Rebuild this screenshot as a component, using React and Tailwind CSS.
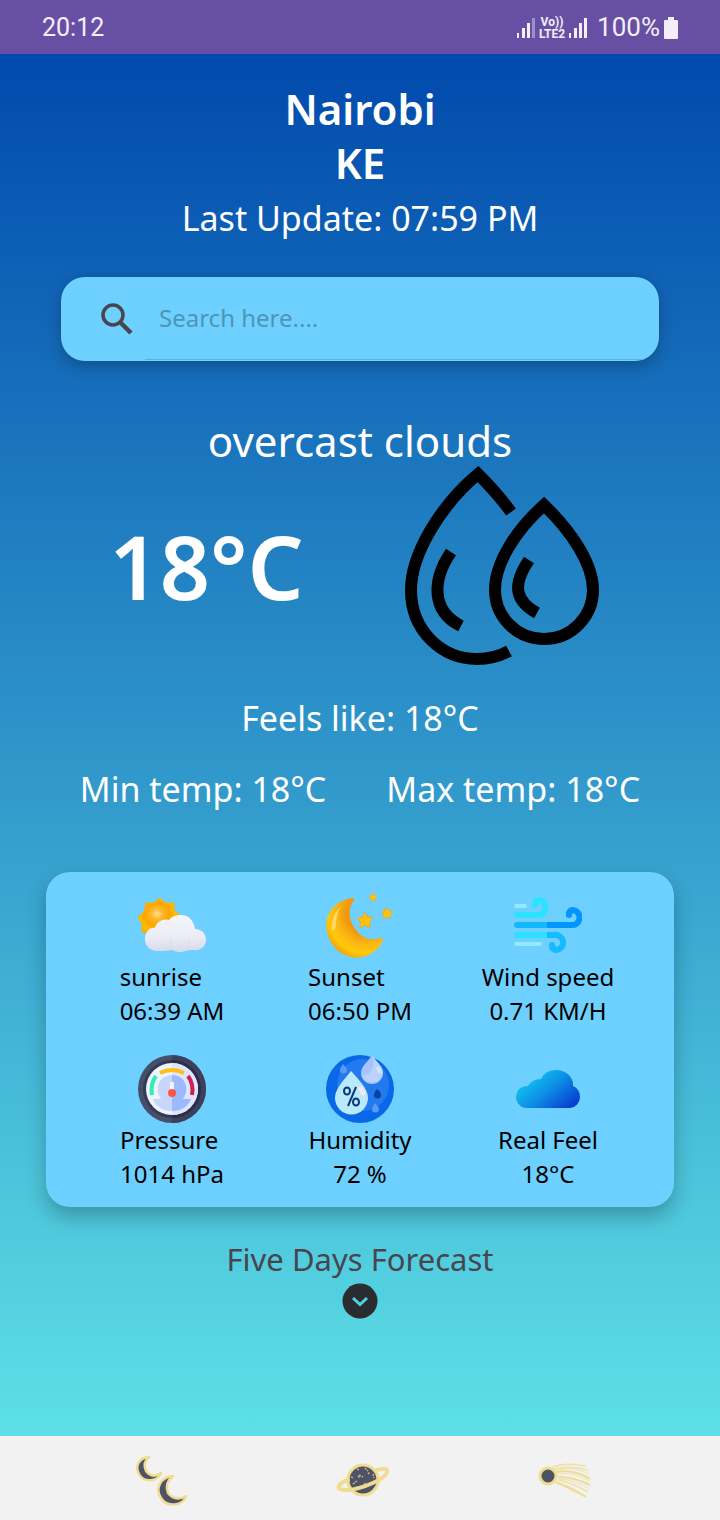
import React from "react";

function Signal({ weak }) {
  return (
    <svg viewBox="0 0 18 20" className="h-5 w-[18px]" fill="#f3eefa" aria-hidden="true">
      <rect x="0" y="15" width="2" height="5" />
      <rect x="5" y="10" width="3" height="10" />
      <rect x="10" y="5" width="3" height="15" />
      <rect x="15" y="0" width="3" height="20" opacity={weak ? 0.4 : 1} />
    </svg>
  );
}

function StatusBar() {
  return (
    <header className="flex h-[54px] items-center justify-between bg-[#6750a4] px-[42px] pt-px text-[#f3eefa]">
      <span className="font-[Roboto] text-[25px]">20:12</span>
      <div className="flex items-center">
        <Signal weak />
        <span className="mx-1 flex flex-col items-center font-[Roboto] text-[12px] leading-[12px] font-bold">
          <span>Vo))</span>
          <span>LTE2</span>
        </span>
        <Signal />
        <span className="ml-2.5 font-[Roboto] text-[26px]">100%</span>
        <svg viewBox="0 0 14 22" className="ml-1 h-[22px] w-3.5" fill="#f3eefa" aria-hidden="true">
          <path d="M4 0h6v3h3q1 0 1 1v17q0 1-1 1H1q-1 0-1-1V4q0-1 1-1h3z" />
        </svg>
      </div>
    </header>
  );
}

function Drops() {
  return (
    <svg viewBox="0 0 196 202" className="h-[202px] w-[196px]" fill="none" stroke="#000" strokeWidth="12" aria-hidden="true">
      <path d="M107 47Q94 29 74 9C38 39 7 88 7 125C7 166 38 194 73 194Q90 194 105 186" />
      <path d="M140 40C112 65 91 98 91 125C91 151 112 174 140 174C168 174 189 151 189 125C189 99 168 67 140 40Z" />
      <path d="M47 87C28 115 27 146 57 161" />
      <path d="M125 95C108 120 111 136 133 148" />
    </svg>
  );
}

function SunriseIcon() {
  return (
    <svg viewBox="0 0 68 68" className="size-[68px]" aria-hidden="true">
      <defs>
        <radialGradient id="sun" cx=".45" cy=".42" r=".6">
          <stop offset="0" stopColor="#ffe08a" />
          <stop offset=".25" stopColor="#ffb52a" />
          <stop offset=".5" stopColor="#ffa500" />
          <stop offset=".75" stopColor="#fcc000" />
          <stop offset="1" stopColor="#f5a20a" />
        </radialGradient>
        <linearGradient id="puff" x1="0" y1="0" x2="0" y2="1">
          <stop offset="0" stopColor="#f6f6fc" />
          <stop offset=".6" stopColor="#eaebf5" />
          <stop offset="1" stopColor="#d6daea" />
        </linearGradient>
      </defs>
      <path d="M22 6L27 11L36 11L36 18L42 23L40 44L12 38L9 41L4 40L4 32L0 25L6 20L8 11L16 11Z" fill="url(#sun)" stroke="#f9b000" strokeWidth="1" strokeLinejoin="round" />
      <path d="M19 59C12 59 7 54 7 47C7 40 12 35 17 36C18 30 25 26 31 28C34 24 39 23 43 23C51 23 56 29 57 37C64 37 68 42 68 48C68 54 63 59 56 58C52 58 50 58 48 59C43 61 38 60 34 58C29 59 24 59 19 59Z" fill="url(#puff)" />
      <path d="M34 57Q30 52 34 46M49 58Q53 53 50 47" fill="none" stroke="#d9dcea" strokeWidth="2" opacity=".5" />
    </svg>
  );
}

function Star({ x, y, s }) {
  return (
    <path
      transform={`translate(${x} ${y}) scale(${s})`}
      d="M-.5-8.500L2.500-3L8.500-2.500L4.500 2L5.500 8L0 5.500L-5.500 8L-4.500 2L-8.500-2L-2.500-3Z"
      fill="#ffc20e"
      stroke="#f3a712"
      strokeWidth="1"
      strokeLinejoin="round"
    />
  );
}

function SunsetIcon() {
  return (
    <svg viewBox="0 0 68 68" className="size-[68px]" aria-hidden="true">
      <defs>
        <radialGradient id="moon" cx=".7" cy=".25" r=".8">
          <stop offset="0" stopColor="#ee8f0a" />
          <stop offset=".45" stopColor="#f09a10" />
          <stop offset=".68" stopColor="#fdb913" />
          <stop offset=".85" stopColor="#ffc907" />
          <stop offset="1" stopColor="#f3a40c" />
        </radialGradient>
      </defs>
      <path d="M28 6C9 7-3 23 1 40C5 58 21 68 36 65C48 62 56 54 57 47Q57 45 54 46C46 49 37 47 31 39C23 30 21 18 28 8Q29 6 28 6Z" fill="url(#moon)" />
      <path d="M16 14Q4 23 6 37Q9 41 10 33Q10 22 16 14Z" fill="#ffe08a" opacity=".7" />
      <Star x={39} y={28} s={0.95} />
      <Star x={61} y={21} s={0.7} />
      <Star x={47} y={5} s={0.5} />
    </svg>
  );
}

function WindIcon() {
  return (
    <svg viewBox="0 0 68 68" className="size-[68px]" fill="none" strokeWidth="6" aria-hidden="true">
      <path d="M2 14H11M2 52H26" stroke="#91eaff" strokeWidth="4" strokeLinecap="round" />
      <path d="M3 23H23A7.500 7.500 0 0 0 25 8Q21 8 21 13" stroke="#2de2ff" strokeLinecap="round" />
      <path d="M3 33H36" stroke="#12b8ff" strokeLinecap="round" />
      <path d="M3 43H36" stroke="#2de2ff" strokeLinecap="round" />
      <path d="M33 33H57A7.500 7.500 0 0 0 59 18Q55 18 55 23" stroke="#0095ff" />
      <circle cx="55" cy="23" r="3" fill="#0095ff" />
      <path d="M33 43H40A7.500 7.500 0 0 1 43 58Q38 58 38 53" stroke="#16baff" />
      <circle cx="38" cy="53" r="3" fill="#16baff" />
    </svg>
  );
}

function PressureIcon() {
  return (
    <svg viewBox="0 0 68 68" className="size-[68px]" fill="none" aria-hidden="true">
      <circle cx="34" cy="34" r="34" fill="#474f68" />
      <path d="M34 0a34 34 0 0 1 0 68z" fill="#3c405c" />
      <circle cx="34" cy="34" r="29" fill="#333a55" />
      <path d="M34 5a29 29 0 0 1 0 58z" fill="#2c2d49" />
      <circle cx="34" cy="34" r="26" fill="#edf3ff" />
      <path d="M34 8a26 26 0 0 1 0 52z" fill="#dce6ff" />
      <path d="M34 20a14 14 0 0 0-13 20l2 4h-8q5 12 19 12z" fill="#c7d7fc" />
      <path d="M34 20a14 14 0 0 1 13 20l-2 4h8q-5 12-19 12z" fill="#9bb9fb" />
      <g strokeWidth="4">
        <path d="M14 40Q12 29 18 21" stroke="#2eefae" />
        <path d="M22 18Q34 12 46 18" stroke="#fdbf10" />
        <path d="M50 21Q56 29 54 40" stroke="#d51d51" />
      </g>
      <path d="M34 27v10" stroke="#f2f5ff" strokeWidth="4" />
      <circle cx="34" cy="38" r="4" fill="#ff5547" />
    </svg>
  );
}

function HumidityIcon() {
  return (
    <svg viewBox="0 0 68 68" className="size-[68px]" aria-hidden="true">
      <circle cx="34" cy="34" r="34" fill="#0968e8" />
      <circle cx="37" cy="30" r="26" fill="#2379ee" />
      <path d="M25 16C19 24 9 33 9 43a16 16 0 0 0 33 0C42 33 32 24 25 16z" fill="#bae9fc" />
      <path d="M46 0C42 7 35 11 35 18a11 11 0 0 0 22 0C57 11 50 7 46 0z" fill="#a4c4fb" />
      <path d="M46 0C50 10 46 20 36 21a11 11 0 0 0 21-3C57 11 50 7 46 0z" fill="#b9d3fd" />
      <ellipse cx="53" cy="15" rx="2" ry="4" fill="#cbebfb" transform="rotate(-25 53 15)" />
      <ellipse cx="36" cy="36" rx="2.500" ry="5" fill="#f4e7ef" transform="rotate(-28 36 36)" />
      <path d="M17 9q-3 4-3 6a3.500 3.500 0 0 0 7 0q0-2-4-6zM49 48q-3 4-3 6a3.500 3.500 0 0 0 7 0q0-2-4-6z" fill="#5b98f5" />
      <path d="M51 34q-3 3-3 6a3.500 3.500 0 0 0 7 0q0-3-4-6z" fill="#07439d" />
      <g fill="none" stroke="#073b78" strokeWidth="2">
        <ellipse cx="21" cy="36" rx="3" ry="3.500" />
        <ellipse cx="30" cy="47" rx="3" ry="3.500" />
        <path d="M30 32L22 51" />
      </g>
    </svg>
  );
}

function CloudIcon() {
  return (
    <svg viewBox="0 0 68 68" className="size-[68px]" aria-hidden="true">
      <defs>
        <linearGradient id="cloud" x1="0" y1=".2" x2="1" y2=".9">
          <stop offset="0" stopColor="#12d4f5" />
          <stop offset=".5" stopColor="#0c8ee5" />
          <stop offset="1" stopColor="#0833cd" />
        </linearGradient>
      </defs>
      <path d="M13 53A11 11 0 0 1 2 42Q3 31 14 31Q18 24 27 24Q31 15 42 15C53 15 60 23 59 31Q66 34 66 42A11 11 0 0 1 56 53Z" fill="url(#cloud)" />
    </svg>
  );
}

const stats = [
  { icon: SunriseIcon, label: "sunrise", value: "06:39 AM", left: true },
  { icon: SunsetIcon, label: "Sunset", value: "06:50 PM", left: true },
  { icon: WindIcon, label: "Wind speed", value: "0.71 KM/H" },
  { icon: PressureIcon, label: "Pressure", value: "1014 hPa", left: true },
  { icon: HumidityIcon, label: "Humidity", value: "72 %" },
  { icon: CloudIcon, label: "Real Feel", value: "18°C" },
];

function Stat({ icon: Icon, label, value, left }) {
  return (
    <div className="flex flex-col items-center">
      <Icon />
      <dl className={left ? "text-left" : "text-center"}>
        <dt>{label}</dt>
        <dd>{value}</dd>
      </dl>
    </div>
  );
}

function MoonsIcon() {
  return (
    <svg viewBox="-3 -2 56 56" className="size-14 overflow-visible" fill="#4d5264" stroke="#f0dc90" strokeWidth="2.500" strokeLinejoin="round" aria-hidden="true">
      <path d="M15 5C4 6 1 15 5 22C10 31 23 30 27 21Q18 27 12 19Q8 11 15 5Z" />
      <path d="M39 24C26 25 21 37 27 46C33 56 49 54 52 44Q41 50 34 41Q30 31 39 24Z" />
    </svg>
  );
}

function PlanetIcon() {
  return (
    <svg viewBox="-2 -2 56 56" className="size-14 overflow-visible" fill="none" aria-hidden="true">
      <circle cx="29" cy="28" r="15" fill="#4d5264" stroke="#f0dc90" strokeWidth="3" />
      <path d="M17 25l3 1m-1 6l4-3m-3 8l4-2m1-12l4 2m2-9l3 3m-6 16l4-5m1 4l4-4m2-8l1 4m-16-2l2 2m7 7l2-1m-12-15l2 1m9 4l2-2" stroke="#c9bb80" strokeWidth="1.500" strokeDasharray="2 1" />
      <path d="M43 18Q54 15 53 20C51 27 29 37 13 38Q3 38 5 34Q7 30 14 28" stroke="#f0dc90" strokeWidth="4" strokeLinecap="round" />
    </svg>
  );
}

function CometIcon() {
  return (
    <svg viewBox="-5 -2 56 56" className="size-14 overflow-visible" fill="none" stroke="#f0dc90" aria-hidden="true">
      <path d="M14 15Q28 10 48 14M16 17Q34 13 50 18M18 31Q33 34 46 44M20 28Q35 31 50 40" strokeWidth="1.500" opacity=".8" />
      <path d="M18 20Q36 17 52 27M20 25Q36 25 52 33M18 30Q32 36 48 45" strokeWidth="2" />
      <path d="M18 18Q38 14 51 22M20 22Q38 20 51 29M20 27Q38 28 51 37" strokeWidth="1" opacity=".7" />
      <circle cx="10" cy="24" r="8" fill="#4d5264" strokeWidth="3" />
    </svg>
  );
}

export default function App() {
  return (
    <div className="flex min-h-screen flex-col font-['Noto_Sans',sans-serif] text-white">
      <StatusBar />
      <main className="flex flex-1 flex-col bg-[linear-gradient(to_bottom,#004aad,#5de0e6)]">
        <div className="pt-7 text-center">
          <h1 className="text-[42px] leading-[54px] font-semibold">
            Nairobi
            <br />
            KE
          </h1>
          <p className="mt-px text-[34px] leading-[54px]">Last Update: 07:59 PM</p>
        </div>

        <form className="mx-[61px] mt-8 flex h-21 overflow-hidden rounded-3xl bg-[#6dd0ff] shadow-[0_5px_16px_rgba(0,0,0,0.25)]" onSubmit={(e) => e.preventDefault()}>
          <button type="submit" aria-label="Search" className="flex w-21 items-center justify-end pr-3">
            <svg viewBox="0 0 32 32" className="size-8" fill="none" stroke="#49454f" aria-hidden="true">
              <circle cx="12" cy="12" r="10" strokeWidth="3.500" />
              <path d="M20 20L30 30" strokeWidth="4.500" />
            </svg>
          </button>
          <input
            type="text"
            aria-label="Search here"
            placeholder="Search here...."
            className="mb-px min-w-0 flex-1 border-b border-[#60b2dc] bg-transparent pl-3.5 text-[24px] text-[#1d1b20] outline-none placeholder:text-[#4e95b7]"
          />
        </form>

        <h2 className="mt-[54px] text-center text-[42px] leading-[52px]">overcast clouds</h2>
        <div className="-mt-0.5 grid grid-cols-2 items-center pr-[71px] pl-[59px]">
          <p className="text-center text-[88px] leading-[100px] font-semibold">18°C</p>
          <div className="flex justify-center">
            <Drops />
          </div>
        </div>
        <p className="mt-6 text-center text-[34px] leading-[54px]">Feels like: 18°C</p>
        <div className="mt-[17px] flex justify-center gap-[60px] text-[34px] leading-[54px]">
          <p>Min temp: 18°C</p>
          <p>Max temp: 18°C</p>
        </div>

        <section className="mx-[46px] mt-14 grid grid-cols-3 gap-y-[27px] rounded-3xl bg-[#6dd0ff] px-8 pt-5 pb-4 text-[24px] leading-[34px] text-black shadow-[0_10px_20px_rgba(0,0,0,0.25)]">
          {stats.map((s) => (
            <Stat key={s.label} {...s} />
          ))}
        </section>

        <div className="mt-7 flex flex-col items-center pb-[116px] text-[#49454f]">
          <p className="text-[31px] leading-[48px]">Five Days Forecast</p>
          <button type="button" aria-label="Show five days forecast" className="size-9">
            <svg viewBox="0 0 36 36" className="size-9" aria-hidden="true">
              <circle cx="18" cy="18" r="17.500" fill="#2a2d30" />
              <path d="M11 15L18 21.500L25 15" fill="none" stroke="#53d2df" strokeWidth="3" />
            </svg>
          </button>
        </div>
      </main>
      <nav className="flex h-21 items-center justify-center gap-[145px] bg-[#f2f2f2]">
        <a href="#moon" aria-label="Moon phases"><MoonsIcon /></a>
        <a href="#planets" aria-label="Planets"><PlanetIcon /></a>
        <a href="#comets" aria-label="Comets"><CometIcon /></a>
      </nav>
    </div>
  );
}
